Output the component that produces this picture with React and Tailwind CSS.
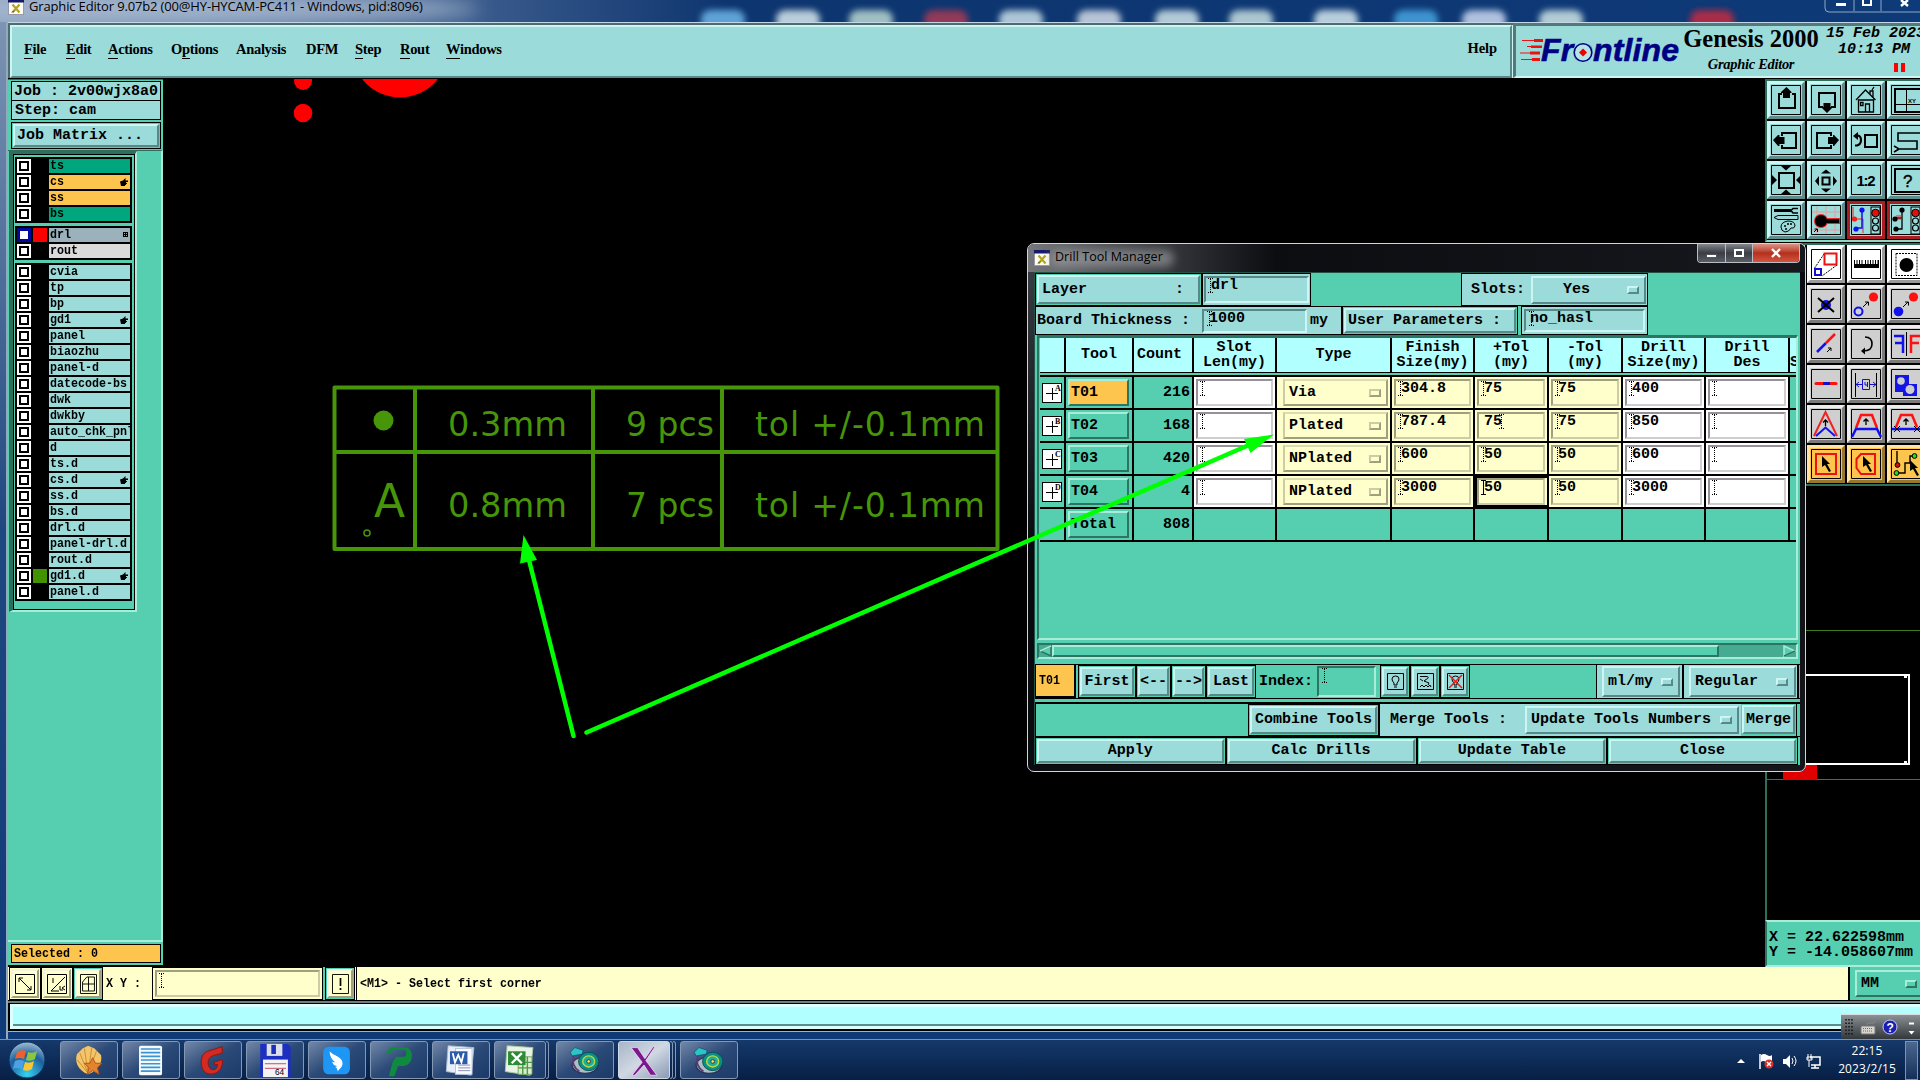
import clsx from 'clsx'

const MONO = "font-['Liberation_Mono',monospace] font-bold text-[15px] leading-[16px] whitespace-pre text-black"
const SMALL = "font-['Liberation_Mono',monospace] font-bold text-[11.67px] leading-[12px] whitespace-pre text-black inline-block scale-y-[1.14]"
const SERIF = "font-['Liberation_Serif',serif] font-bold text-black whitespace-pre"

const UP = 'border-t-[#cdf5f3] border-l-[#cdf5f3] border-b-[#598888] border-r-[#598888]'
const DOWN = 'border-t-[#598888] border-l-[#598888] border-b-[#cdf5f3] border-r-[#cdf5f3]'
const GREEN_UP = 'border-t-[#a9ecd9] border-l-[#a9ecd9] border-b-[#2d7563] border-r-[#2d7563]'
const GREEN_DOWN = 'border-t-[#2d7563] border-l-[#2d7563] border-b-[#a9ecd9] border-r-[#a9ecd9]'
const YELLOW_DOWN = 'border-t-[#a09f80] border-l-[#a09f80] border-b-[#cdcca6] border-r-[#cdcca6]'
const WHITE_DOWN = 'border-t-[#969298] border-l-[#969298] border-b-[#cfcdd0] border-r-[#cfcdd0]'

function Caret({ solid }) {
  return (
    <svg width="5" height="15" viewBox="0 0 5 15" className="shrink-0" shapeRendering="crispEdges">
      <path
        d="M0 .5h5M2.5 1v13M0 14.5h5"
        stroke="#000"
        fill="none"
        strokeDasharray={solid ? undefined : '1 1'}
      />
    </svg>
  )
}

// raised motif-style push button inside a thin black frame
function FramedButton({ children, className, inner }) {
  return (
    <div className={clsx('border border-black bg-[#55cfb0] p-px flex', className)}>
      <div className={clsx('flex-1 border-2 bg-[#9bdbda] flex items-center justify-center', UP, MONO, inner)}>
        {children}
      </div>
    </div>
  )
}

function OptionMark({ tone = 'cyan' }) {
  return (
    <span
      className={clsx(
        'block w-3 h-2 border-2 shrink-0',
        tone === 'cyan' && UP,
        tone === 'green' && GREEN_UP,
        tone === 'yellow' && 'border-t-[#cdcca6] border-l-[#cdcca6] border-b-[#a09f80] border-r-[#a09f80]'
      )}
    />
  )
}

/* ---------- title bar and menu ---------- */

function XIcon({ className }) {
  return (
    <svg width="16" height="16" viewBox="0 0 16 16" className={className}>
      <rect x=".5" y=".5" width="15" height="15" fill="#fdfdf4" stroke="#99a" />
      <rect x="0" y="0" width="16" height="3.5" fill="#141b6b" />
      <path d="M4.5 5.5l7 8M11.5 5.5l-7 8" stroke="#b3a521" strokeWidth="2.2" />
      <path d="M4 13.5l2-2" stroke="#444" />
    </svg>
  )
}

const blobs = [
  [722, '#6db5e8'], [797, '#d8e8ee'], [870, '#b9d8d2'], [945, '#a93a55'], [1020, '#c9dfe8'],
  [1098, '#d5dde8'], [1176, '#cfe3e8'], [1250, '#c6dfe0'], [1335, '#d6e8ee'], [1415, '#46a4e0'],
  [1483, '#ccd9f2'], [1560, '#cfe5e6'], [1711, '#c42c40'],
]

function TitleBar() {
  return (
    <div className="h-[22px] shrink-0 relative overflow-hidden bg-linear-to-r from-[#8fa5c2] via-[#0d356f] via-[38%] to-[#0d3a78] flex">
      <svg width="1920" height="22" className="absolute inset-0">
        <defs>
          <filter id="soft" x="-20%" y="-60%" width="140%" height="220%">
            <feGaussianBlur stdDeviation="3" />
          </filter>
          <filter id="haze" x="-20%" y="-100%" width="140%" height="300%">
            <feGaussianBlur stdDeviation="9" />
          </filter>
        </defs>
        <ellipse cx="220" cy="9" rx="260" ry="14" fill="#b4c2d6" opacity=".75" filter="url(#haze)" />
        {blobs.map(([x, c]) => (
          <rect key={x} x={x - 21} y="10" width="44" height="20" rx="9" fill={c} opacity=".85" filter="url(#soft)" />
        ))}
      </svg>
      <div className="relative flex h-[16px] w-full">
        <XIcon className="ml-2 -mt-[1px]" />
        <span className="ml-[5px] -mt-[2px] font-['Open_Sans',sans-serif] text-[13px] leading-[17px] tracking-[-0.15px] text-black whitespace-pre">
          Graphic Editor 9.07b2 (00@HY-HYCAM-PC411 - Windows, pid:8096)
        </span>
      </div>
      <svg width="96" height="14" className="absolute right-0 top-0">
        <path d="M1 0v8q0 4 4 4h91M30 0v11M57 0v11" stroke="#8ea6c6" fill="none" />
        <path d="M12 4.5h10" stroke="#fff" strokeWidth="3" />
        <path d="M39 0v5h8V0" stroke="#fff" strokeWidth="2" fill="none" />
        <path d="M77 0l7 6M84 0l-7 6" stroke="#fff" strokeWidth="2.4" />
      </svg>
    </div>
  )
}

const menus = [
  ['', 'F', 'ile', 'w-[42px]'],
  ['', 'E', 'dit', 'w-[42px]'],
  ['', 'A', 'ctions', 'w-[63px]'],
  ['O', 'p', 'tions', 'w-[65px]'],
  ['Analysis', '', '', 'w-[70px]'],
  ['DFM', '', '', 'w-[49px]'],
  ['', 'S', 'tep', 'w-[45px]'],
  ['', 'R', 'out', 'w-[46px]'],
  ['', 'W', 'indows', 'w-[70px]'],
]

function MenuBar() {
  return (
    <div className="h-[56px] flex shrink-0 border-t border-[#c3d8e6]">
      <div className="w-[1505px] border-t-2 border-l-2 border-[#4e6c70] flex">
        <div className={clsx('flex-1 border-2 bg-[#9bdbda] flex items-center pl-[12px] pb-[5px]', UP)}>
          {menus.map(([pre, u, post, w]) => (
            <span key={pre + u + post} className={clsx(SERIF, w, 'text-[14.5px] leading-[18px] tracking-[-0.3px]')}>
              {pre}
              <span className="border-b border-black pb-px">{u}</span>
              {post}
            </span>
          ))}
          <span className={clsx(SERIF, 'ml-auto mr-[13px] text-[14.5px] tracking-[-0.1px]')}>Help</span>
        </div>
        <div className="w-px bg-[#cdf5f3]" />
      </div>
      <div className="flex-1 border-t-3 border-l-3 border-b-2 border-t-[#56787b] border-l-[#56787b] border-b-[#cdf5f3] bg-[#9bdbda] flex overflow-hidden">
        <svg width="167" height="50" viewBox="1516 25 167 50" className="shrink-0">
          <path
            d="M1522 39.5h21M1520 52h20M1527 45.5h14M1521 58.5h18"
            stroke="#e11"
            strokeWidth="1.2"
          />
          <path d="M1534 38h9v3h-9zM1531 44.5h11v2.5h-11zM1530 50.5h10v3h-10zM1532 57h8v3h-8z" fill="#e11" />
          <g className="font-['Liberation_Sans',sans-serif] font-bold italic" fontSize="32" fill="#000082">
            <text x="1541" y="60" textLength="138" stroke="#000082" strokeWidth=".6">Frontline</text>
          </g>
          <circle cx="1583" cy="51.5" r="10" fill="#9bdbda" />
          <circle cx="1583" cy="51.5" r="8.8" fill="#b4e4e6" stroke="#000082" strokeWidth="1.6" />
          <path d="M1583 47.5l4 4-4 4-4-4z" fill="#e00" />
        </svg>
        <div className="flex flex-col items-center w-[136px] shrink-0">
          <span className={clsx(SERIF, 'text-[24.5px] leading-[27px] -mt-px')}>Genesis 2000</span>
          <span className={clsx(SERIF, 'italic text-[14.5px] leading-[18px] mt-[3px] tracking-[-0.3px]')}>
            Graphic Editor
          </span>
        </div>
        <div className={clsx(MONO, 'italic ml-[7px] w-[94px] shrink-0 !leading-[15px] flex flex-col')}>
          <span>15 Feb 2023</span>
          <span className="pl-[12px] pt-px">10:13 PM</span>
          <span className="flex gap-[3px] pl-[68px] mt-[6px]">
            <i className="block w-1 h-[9px] bg-[#f00]" />
            <i className="block w-1 h-[9px] bg-[#f00]" />
          </span>
        </div>
      </div>
    </div>
  )
}

/* ---------- left sidebar ---------- */

const CYAN = 'bg-[#9bdbda]'
const groups = [
  [
    { n: 'ts', c: 'bg-[#00a67e]' },
    { n: 'cs', c: 'bg-[#fdc54d]', hand: true },
    { n: 'ss', c: 'bg-[#fdc54d]' },
    { n: 'bs', c: 'bg-[#00a67e]' },
  ],
  [
    { n: 'drl', c: 'bg-[#9bb1bc]', on: true, sw: 'bg-[#f00]', grid: true },
    { n: 'rout', c: 'bg-[#dbdbdb]' },
  ],
  [
    { n: 'cvia' }, { n: 'tp' }, { n: 'bp' }, { n: 'gd1', hand: true }, { n: 'panel' }, { n: 'biaozhu' },
    { n: 'panel-d' }, { n: 'datecode-bs' }, { n: 'dwk' }, { n: 'dwkby' }, { n: 'auto_chk_pnl' }, { n: 'd' },
    { n: 'ts.d' }, { n: 'cs.d', hand: true }, { n: 'ss.d' }, { n: 'bs.d' }, { n: 'drl.d' },
    { n: 'panel-drl.d' }, { n: 'rout.d' }, { n: 'gd1.d', hand: true, sw: 'bg-[#419400]' }, { n: 'panel.d' },
  ],
]

function Layer({ n, c = CYAN, on, sw, hand, grid }) {
  return (
    <div className="flex gap-[2px] h-[14px]">
      <div className={clsx('w-[14px] flex items-center justify-center', on ? 'bg-[#000a9c]' : 'bg-white')}>
        <i className={clsx('block border-2 bg-white', on ? 'w-[8px] h-[8px] border-white' : 'w-[10px] h-[10px] border-black')} />
      </div>
      <div className={clsx('w-[14px]', sw)} />
      <div className={clsx('w-[81px] flex items-center overflow-hidden pl-px', c)}>
        <span className={SMALL}>{n}</span>
        {hand && (
          <svg width="8" height="8" viewBox="0 0 8 8" className="ml-auto mr-[2px] shrink-0">
            <path d="M0 3.5l3-1L5.5 0v2.5H8v1.5H6v1h1v1H6v1H5v1H1z" fill="#000" />
          </svg>
        )}
        {grid && (
          <svg width="6" height="6" viewBox="0 0 6 6" className="ml-auto mr-[1px] shrink-0" shapeRendering="crispEdges">
            <path d="M.5.5h4v4h-4zM2.5 0v5M0 2.5h5" stroke="#000" fill="none" />
          </svg>
        )}
      </div>
    </div>
  )
}

function Sidebar() {
  return (
    <div className="w-[155px] shrink-0 bg-[#55cfb0] flex flex-col border-t border-[#2d6f5d]">
      <div className={clsx(MONO, 'mt-px mx-[3px] mr-[2px] h-[20px] border border-black bg-[#9bdbda] pl-[2px] !leading-[20px]')}>
        Job : 2v00wjx8a0
      </div>
      <div className={clsx(MONO, '-mt-px ml-[3px] mr-[2px] h-[20px] border border-black bg-[#9bdbda] pl-[3px] !leading-[19px]')}>
        Step: cam
      </div>
      <FramedButton className="mt-[2px] ml-[3px] mr-[2px] h-[27px]" inner="!justify-start pl-[2px] pt-px">
        Job Matrix ...
      </FramedButton>
      <div className="mt-px h-[794px] border-t border-t-[#2d6f5d] border-r-2 border-r-[#a9ecd9] border-b-2 border-b-[#a9ecd9]">
        <div className="ml-px w-[128px] h-[461px] border-l-4 border-t-3 border-r-2 border-b-2 border-t-[#2d6f5d] border-l-[#2d6f5d] border-r-[#a9ecd9] border-b-[#a9ecd9]">
          <div className="h-full border border-black pl-px pt-[2px] flex flex-col gap-[3px]">
            {groups.map((g, i) => (
              <div key={i} className="w-[117px] bg-black p-[2px] flex flex-col gap-[2px]">
                {g.map(l => (
                  <Layer key={l.n} {...l} />
                ))}
              </div>
            ))}
          </div>
        </div>
      </div>
      <div className="h-[23px] pt-[2px] pl-[3px] pr-[2px] bg-[#55cfb0]">
        <div className="h-[19px] border border-black bg-[#fdc54d] pl-[2px] flex items-center">
          <span className={SMALL}>Selected : 0</span>
        </div>
      </div>
      <div className="h-[2px] bg-black" />
    </div>
  )
}

/* ---------- CAD canvas ---------- */

function Canvas() {
  return (
    <svg width="1602" height="888" viewBox="163 79 1602 888" className="bg-black shrink-0 block">
      <g fill="#f00">
        <circle cx="303" cy="81" r="9" />
        <circle cx="303" cy="113" r="9.3" />
        <circle cx="400" cy="49.5" r="48" />
      </g>
      <g stroke="#479609" strokeWidth="4" fill="none" strokeLinejoin="round">
        <rect x="334.5" y="387.5" width="663" height="161.5" />
        <path d="M334 452h664M415 387v162M593 387v162M722 387v162" />
      </g>
      <circle cx="383.5" cy="420.5" r="10" fill="#479609" />
      <circle cx="367" cy="533" r="3" fill="none" stroke="#479609" strokeWidth="1.5" />
      <g className="font-['DejaVu_Sans',sans-serif]" fill="#479609" fontSize="33">
        <text x="374" y="516.5" fontSize="46" textLength="31" lengthAdjust="spacingAndGlyphs">A</text>
        <text x="448" y="435.7" textLength="119" lengthAdjust="spacingAndGlyphs">0.3mm</text>
        <text x="626" y="435.7" textLength="88">9 pcs</text>
        <text x="755" y="435.7" textLength="230">tol +/-0.1mm</text>
        <text x="448" y="516.5" textLength="119" lengthAdjust="spacingAndGlyphs">0.8mm</text>
        <text x="626" y="516.5" textLength="88">7 pcs</text>
        <text x="755" y="516.5" textLength="230">tol +/-0.1mm</text>
      </g>
    </svg>
  )
}

/* ---------- right tool palettes ---------- */

const traffic = (
  <>
    <rect x="24" y="6" width="9" height="27" fill="#9bdbda" stroke="#000" />
    <circle cx="28.5" cy="12" r="3.8" fill="#e01010" stroke="#000" />
    <circle cx="28.5" cy="20" r="3" fill="none" stroke="#000" strokeWidth="1.2" />
    <circle cx="28.5" cy="27" r="3" fill="none" stroke="#000" strokeWidth="1.2" />
  </>
)

const glyphs = {
  up: (
    <>
      <path d="M15 13h-3v14h16V13h-3" fill="none" stroke="#000" strokeWidth="2" />
      <path d="M19.5 6l5 5v1h-1.5v5h-7v-5H14v-1z" />
    </>
  ),
  down: (
    <>
      <path d="M16 26h-4V12h16v14h-4" fill="none" stroke="#000" strokeWidth="2" />
      <path d="M20 32l-5-5v-1h1.5v-4h7v4H25v1z" />
    </>
  ),
  house: (
    <path
      d="M9 19l9.5-10 10 10M11.5 19v12h15V19zM18.5 31v-8h4v8M13.5 21.5h2.5v3h-2.5zM23 13v-3h3v6M25 9l2-3"
      fill="none"
      stroke="#000"
      strokeWidth="1.3"
    />
  ),
  xy: (
    <>
      <path d="M8 8h26v23H8z" fill="none" stroke="#000" strokeWidth="2" />
      <path d="M19.5 8v23M8 23.5h26" stroke="#000" />
      <text x="21" y="22" fontSize="6" className="font-['Liberation_Sans',sans-serif] font-bold">XY</text>
    </>
  ),
  left: (
    <>
      <path d="M15 15v-3h14v15H15v-3" fill="none" stroke="#000" strokeWidth="2" />
      <path d="M6 19l5-5h1.5v2h5v7h-5v2H11z" />
    </>
  ),
  right: (
    <>
      <path d="M24 15v-3H10v15h14v-3" fill="none" stroke="#000" strokeWidth="2" />
      <path d="M32 19l-5-5h-1v2h-5v7h5v2h1z" />
    </>
  ),
  back: (
    <>
      <path d="M18 14h12v12H18z" fill="none" stroke="#000" strokeWidth="2" />
      <path d="M8 14.5h2q4 0 4 4.5t-4 5.5h-2" fill="none" stroke="#000" strokeWidth="2.2" />
      <path d="M6 15l5-4v8z" />
    </>
  ),
  snake: (
    <path d="M38 9l-4 3H11v8h19v8H12l-5-3M12 28l-5 3" fill="none" stroke="#000" strokeWidth="1.6" />
  ),
  zoomin: (
    <>
      <path d="M12 12h15v15H12z" fill="none" stroke="#000" strokeWidth="2" />
      <path d="M14 5h10l-5 4.5zM14 33h10l-5-4.5zM5 14v10l5-5zM34 14v10l-5-5z" />
    </>
  ),
  zoomout: (
    <>
      <path d="M15.5 16.5h7v7h-7z" fill="none" stroke="#000" strokeWidth="2" />
      <path d="M14 12.5h10l-5-4zM14 27.5h10l-5 4zM12 15v10l-4-5zM26 15v10l4-5z" />
    </>
  ),
  ratio: (
    <text x="9.5" y="24.5" fontSize="15" textLength="19" className="font-['Liberation_Sans',sans-serif] font-bold">1:2</text>
  ),
  help: (
    <>
      <path d="M8 8h26v23H8z" fill="none" stroke="#000" strokeWidth="2" />
      <text x="16" y="26" fontSize="17" className="font-['Liberation_Sans',sans-serif]" stroke="#000" strokeWidth=".4">?</text>
    </>
  ),
  tools: (
    <>
      <path d="M7 9.5h17" stroke="#000" strokeWidth="3" />
      <path d="M31 7.5h-5l-2 2 2 2.5h5" fill="none" stroke="#000" strokeWidth="1.6" />
      <path d="M7 16.5l4-2h20v4H11z" fill="none" stroke="#000" />
      <path d="M14 26q0-5 7-6 7 0 7 5-1 3-4 2-2 4-6 4-4-1-4-5z" fill="none" stroke="#000" />
      <path d="M17 25h2M20 23h2M23 23h2M18 28h2" stroke="#000" strokeWidth="1.4" />
    </>
  ),
  pad: (
    <>
      <path d="M10 5v28M19 5v28M28 5v28M5 11h28M5 29h28" stroke="#e99" fill="none" />
      <path d="M14 20h19" stroke="#e22" strokeWidth="6" />
      <circle cx="14" cy="20" r="7" fill="#e22" />
      <path d="M14 20h18" stroke="#000" strokeWidth="4" />
      <circle cx="14" cy="20" r="6" />
      <path d="M7 31l3-3M7.5 28h3v3" stroke="#000" fill="none" />
    </>
  ),
  lightRed: (
    <>
      <path d="M6 6v12h10v14" stroke="#e22" fill="none" />
      <path d="M15 9v18H9" stroke="#11e" strokeWidth="1.5" fill="none" />
      <circle cx="15" cy="9" r="2.6" fill="#11e" />
      <circle cx="7.5" cy="18" r="2.6" fill="#e22" />
      <circle cx="9" cy="28" r="2.6" fill="#11e" />
      {traffic}
    </>
  ),
  lightBlack: (
    <>
      <path d="M15 9v8H8M15 17v11H9" stroke="#000" strokeWidth="1.3" fill="none" />
      <path d="M10 14v5M12 14v5M14 14v5" stroke="#e22" />
      <circle cx="15" cy="9" r="2.6" />
      <circle cx="8" cy="18" r="2.6" />
      <circle cx="9" cy="28" r="2.6" />
      {traffic}
    </>
  ),
  resize: (
    <>
      <path d="M17 9L7 24M30 20L15 31" stroke="#000" strokeDasharray="2 1" />
      <path d="M17.5 8.5h12v11h-12z" fill="none" stroke="#e11" strokeWidth="2" />
      <path d="M8 24h6v6H8z" fill="none" stroke="#11c" strokeWidth="2" />
    </>
  ),
  ruler: <path d="M7 15h1v4h1.5v-4h1v4h1.5v-4h1v4h1.5v-4h1v4H18v-4h1v4h1.5v-4h1v4H23v-4h1v4h1.5v-4h1v4H28v-4h1v4h1.5v-4H32v8H7z" />,
  dotsel: (
    <>
      <path d="M9 8.5h21v22H9z" fill="none" stroke="#000" strokeDasharray="2 1" />
      <circle cx="19.5" cy="20" r="7" />
    </>
  ),
  cross: (
    <>
      <circle cx="19" cy="20" r="5" fill="#1414d8" />
      <path d="M11 13l16 14M27 13L11 27" stroke="#000" strokeWidth="2" />
    </>
  ),
  moveOpen: (
    <>
      <circle cx="11.5" cy="26.5" r="4" fill="none" stroke="#11e" strokeWidth="2" />
      <circle cx="26.5" cy="12" r="4.6" fill="#f11" />
      <path d="M16 22l5-5M18 17h3.5v3.5" stroke="#000" fill="none" />
    </>
  ),
  moveFull: (
    <>
      <circle cx="11.5" cy="26.5" r="4.8" fill="#11e" />
      <circle cx="26.5" cy="12" r="4.6" fill="#f11" />
      <path d="M16 22l5-5M18 17h3.5v3.5" stroke="#000" fill="none" />
    </>
  ),
  slash: (
    <>
      <path d="M10 27l9-9" stroke="#11e" strokeWidth="2.5" />
      <path d="M19 18l9-9" stroke="#f11" strokeWidth="2.5" />
      <path d="M20 27l4-4M21 23h3v3" stroke="#000" fill="none" />
    </>
  ),
  rotate: (
    <>
      <path d="M18 12q7 0 7 7t-9 7" fill="none" stroke="#000" strokeWidth="1.6" />
      <path d="M14 26l4-3.5v7z" />
    </>
  ),
  mirror: (
    <>
      <path d="M7 11h9v17M16 18H8" fill="none" stroke="#11e" strokeWidth="2.5" />
      <path d="M33 11h-9v17M24 18h8" fill="none" stroke="#f11" strokeWidth="2.5" />
      <path d="M19.5 7v24" stroke="#000" />
    </>
  ),
  bar: (
    <>
      <path d="M9 18.5h20" stroke="#f11" strokeWidth="3" strokeLinecap="round" />
      <path d="M16 18.5h7" stroke="#11c" strokeWidth="3" />
    </>
  ),
  gauge: (
    <>
      <path d="M8.5 8v24M29.5 8v24" stroke="#000" />
      <path d="M9 19.5h6M23 19.5h6M12 17l-3 2.5 3 2.5M26 17l3 2.5-3 2.5M15.5 14.5h7v10h-7z" fill="none" stroke="#11c" />
      <path d="M18 17v3h3M20.5 17v5" fill="none" stroke="#11c" />
    </>
  ),
  shapes: (
    <>
      <path d="M8 10h14v9h8v12H16v-4H8z" fill="#1414e8" />
      <circle cx="14" cy="16" r="3.8" fill="#ccc" />
      <circle cx="23" cy="24.5" r="4.5" fill="#ccc" />
    </>
  ),
  peakA: (
    <>
      <path d="M7 31L18.5 7 30 31" fill="none" stroke="#e22" strokeWidth="2" />
      <path d="M9 31l9.5-8.5L28 31" fill="none" stroke="#11e" strokeWidth="2" />
      <path d="M18.5 21v-6M16 17.5l2.5-2.5 2.5 2.5" stroke="#000" fill="none" strokeWidth="1.3" />
    </>
  ),
  peakB: (
    <>
      <path d="M9 23l5-13h11l5 13" fill="none" stroke="#f11" strokeWidth="2.5" />
      <path d="M5 32l4-8h21l4 8" fill="none" stroke="#11e" strokeWidth="2.5" />
      <path d="M19 20v-6M16.5 16.5l2.5-2.5 2.5 2.5" stroke="#000" fill="none" strokeWidth="1.3" />
    </>
  ),
  peakC: (
    <>
      <path d="M9 22l5-12h11l5 12" fill="none" stroke="#f11" strokeWidth="2.5" />
      <path d="M5 24h29" stroke="#11e" strokeWidth="2.5" />
      <path d="M7 21l6 6M13 21l-6 6M27 21l6 6M33 21l-6 6" stroke="#000" />
      <path d="M19 20v-6M16.5 16.5l2.5-2.5 2.5 2.5" stroke="#000" fill="none" strokeWidth="1.3" />
    </>
  ),
  selRect: (
    <>
      <path d="M9 9h20v20H9z" fill="none" stroke="#e11" strokeWidth="2" />
      <path d="M15 11l8 8h-3l4 7-2 1-4-7-3 2z" />
    </>
  ),
  selPoly: (
    <>
      <path d="M14 9h14v20H14l-4.5-6v-9z" fill="none" stroke="#e11" strokeWidth="2" />
      <path d="M16 11l8 8h-3l4 7-2 1-4-7-3 2z" />
    </>
  ),
  selNet: (
    <>
      <path d="M10 6v14M10 28h8V18h5v-7h4" fill="none" stroke="#000" strokeWidth="1.4" />
      <circle cx="10.5" cy="20" r="2.4" fill="#c11" stroke="#000" />
      <circle cx="27.5" cy="11" r="2.4" fill="#2d2" stroke="#000" />
      <circle cx="9.5" cy="28" r="2.4" fill="#2d2" stroke="#000" />
      <path d="M23 15l8 8h-3l4 7-2 1-4-7-3 2z" />
    </>
  ),
}

const tones = {
  cyan: 'bg-[#9bdbda] border-t-[#cdf5f3] border-l-[#cdf5f3] border-b-[#5d8c8c] border-r-[#5d8c8c]',
  red: 'bg-[#9bdbda] border-[#a81e22]',
  white: 'bg-white border-t-[#fff] border-l-[#fff] border-b-[#9a9a9a] border-r-[#9a9a9a]',
  gray: 'bg-[#cfcfcf] border-t-[#ededed] border-l-[#ededed] border-b-[#7b7b7b] border-r-[#7b7b7b]',
  orange: 'bg-[#fdc54d] border-t-[#fee4a8] border-l-[#fee4a8] border-b-[#98762c] border-r-[#98762c]',
}

function ToolRow({ names, tone }) {
  return (
    <div className="flex gap-[2px]">
      {names.map((n, i) => {
        const t = n.startsWith('light') ? 'red' : tone
        return (
          <div key={n + i} className={clsx('w-[38px] h-[38px] border-3 shrink-0 relative', tones[t])}>
            <svg width="38" height="38" viewBox="0 0 38 38" className="absolute -left-[3px] -top-[3px]">
              <path d="M4.5 4.5h29v29h-29z" fill="none" stroke="#000" />
              {glyphs[n]}
            </svg>
          </div>
        )
      })}
    </div>
  )
}

function RightColumn() {
  return (
    <div className="w-[155px] shrink-0 bg-black overflow-hidden flex flex-col">
      <div className="border-l-2 border-t-2 border-[#2d6f5d] border-b-2 border-b-[#8fd6c4] h-[163px] flex flex-col gap-[2px]">
        <ToolRow tone="cyan" names={['up', 'down', 'house', 'xy']} />
        <ToolRow tone="cyan" names={['left', 'right', 'back', 'snake']} />
        <ToolRow tone="cyan" names={['zoomin', 'zoomout', 'ratio', 'help']} />
        <ToolRow tone="cyan" names={['tools', 'pad', 'lightRed', 'lightBlack']} />
      </div>
      <div className="border-l-2 border-t-2 border-[#2d6f5d] border-b-2 mt-px h-[243px] flex flex-col gap-[2px]">
        <ToolRow tone="white" names={['resize', 'resize', 'ruler', 'dotsel']} />
        <ToolRow tone="gray" names={['cross', 'cross', 'moveOpen', 'moveFull']} />
        <ToolRow tone="gray" names={['slash', 'slash', 'rotate', 'mirror']} />
        <ToolRow tone="gray" names={['bar', 'bar', 'gauge', 'shapes']} />
        <ToolRow tone="gray" names={['peakA', 'peakA', 'peakB', 'peakC']} />
        <ToolRow tone="orange" names={['selRect', 'selRect', 'selPoly', 'selNet']} />
      </div>
      <svg width="155" height="434" viewBox="1765 486 155 434" className="bg-black shrink-0" shapeRendering="crispEdges">
        <path d="M1765.5 486v434" stroke="#2d6f5d" strokeWidth="2" />
        <path d="M1766 630.5h154M1766 779.5h154" stroke="#3f7d1c" />
        <rect x="1783" y="763" width="34" height="17" fill="#e00000" />
        <path d="M1790 675h119v89h-119" fill="none" stroke="#fff" strokeWidth="2" />
        <path d="M1904 677h3M1904 762h3" stroke="#fff" strokeWidth="2" />
      </svg>
      <div className={clsx(MONO, 'h-[47px] border-t-2 border-l-2 border-b-2 bg-[#55cfb0] pl-[2px] pt-[8px] !leading-[15px]', 'border-t-[#a9ecd9] border-l-[#2d7563] border-b-[#a9ecd9]')}>
        <div>X = 22.622598mm</div>
        <div>Y = -14.058607mm</div>
      </div>
    </div>
  )
}

/* ---------- bottom command line ---------- */

function CmdIcon({ green, w = 20, children }) {
  return (
    <div className={clsx('h-full border border-black p-px', green ? 'bg-[#55cfb0]' : 'bg-[#ffffcc]')}>
      <div className="w-full h-full bg-[#ffffcc] border-2 border-t-[#f4f3dc] border-l-[#f4f3dc] border-b-[#a09f80] border-r-[#a09f80] flex items-center justify-center">
        <svg width={w} height="20" viewBox="0 0 20 20" preserveAspectRatio="none" fill="none" stroke="#000">
          {children}
        </svg>
      </div>
    </div>
  )
}

function CommandRow() {
  return (
    <div className="h-[33px] shrink-0 flex bg-[#ffffcc]">
      <div className="w-[33px] pl-[1px]">
        <CmdIcon>
          <path d="M.5.5h19v19H.5zM4 4l12 12M4 8V4h4M16 12v4h-4" />
        </CmdIcon>
      </div>
      <div className="w-[32px]">
        <CmdIcon>
          <path d="M.5.5h19v19H.5zM4 17L18 3M4 17h8M6 4v5M13 12v4h3M18 12l-3 2 3 2" />
        </CmdIcon>
      </div>
      <div className="w-[30px]">
        <CmdIcon green w={17}>
          <path d="M.6.5h18.800v19H.6z" />
          <path d="M8 3h9v14H3V8zM10 3v14M3 10h14" />
        </CmdIcon>
      </div>
      <div className="w-[49px] pl-[3px] flex items-center">
        <span className={SMALL}>X Y :</span>
      </div>
      <div className="w-[171px] border border-black p-[2px]">
        <div className={clsx('h-full border-2 pt-[1px] pl-[2px] bg-[#ffffcc]', YELLOW_DOWN)}>
          <Caret />
        </div>
      </div>
      <div className="w-[2px] bg-[#55cfb0]" />
      <div className="w-[30px]">
        <CmdIcon green w={17}>
          <path d="M.6.5h18.800v19H.6z" />
          <path d="M10 4v8M10 14v2" strokeWidth="2" />
        </CmdIcon>
      </div>
      <div className="flex-1 ml-px border-l border-black pl-[3px] pt-px flex items-center">
        <span className={SMALL}>&lt;M1&gt; - Select first corner</span>
      </div>
      <div className="w-[72px] border-l-2 border-black bg-[#55cfb0] pl-[5px] py-[3px] overflow-hidden">
        <div className={clsx('w-[80px] h-[27px] border-2 flex items-center pl-[4px] gap-[26px]', GREEN_UP)}>
          <span className={MONO}>MM</span>
          <OptionMark tone="green" />
        </div>
      </div>
    </div>
  )
}

/* ---------- Windows taskbar ---------- */

const spool = (
  <>
    <ellipse cx="18" cy="24" rx="14" ry="9" fill="#aebfc4" stroke="#2b3055" strokeWidth="1.5" />
    <path d="M6 14q-4 10 6 17" stroke="#5d3a78" strokeWidth="2" fill="none" />
    <ellipse cx="22" cy="20" rx="11" ry="10" fill="#0a8f84" stroke="#0a4f55" />
    <ellipse cx="22" cy="20" rx="6.5" ry="6" fill="#17b0a0" stroke="#c5d838" strokeWidth="1.5" />
    <circle cx="22" cy="20" r="2" fill="#f2e05a" stroke="#333" />
    <path d="M2 10l5-5 9 3-1 4-11 2z" fill="#2cc6c0" stroke="#117" strokeWidth=".5" />
  </>
)

const apps = [
  <>
    <path d="M17 34C6 30 2 20 5 12l6-6 6-3 7 3 7 7c2 8-3 17-14 21z" fill="#f4c46a" />
    <path d="M17 33L8 11M17 33L13 6M17 33l4-28M17 33l9-24M17 33L5 18" stroke="#c98a2b" />
    <path d="M22 16l3 6 7 0-5 5 2 7-7-4-6 4 2-7-5-5 6 0z" fill="#e5822c" stroke="#a8551c" />
  </>,
  <>
    <rect x="5" y="3" width="25" height="32" rx="2" fill="#f4faff" />
    <path d="M7 6.5h21M7 10.5h21M7 14.5h21M7 18.5h21M7 22.5h21M7 26.5h21M7 30.5h21" stroke="#3a94d0" strokeWidth="1.8" />
  </>,
  <path d="M28 4L12 9C6 11 4 18 6 26c2 7 8 9 14 7 6-2 9-8 8-15l-9 3 1 3 3-1c0 4-2 6-5 6-4 0-6-5-5-10 1-4 4-5 8-6l7-2z" fill="#d42a22" stroke="#8e1410" />,
  <>
    <path d="M2 1h30l3 3v33H2z" fill="#1d2fc0" />
    <rect x="9" y="1" width="17" height="13" fill="#dde0e8" />
    <rect x="14" y="2" width="5" height="10" fill="#1d2fc0" />
    <rect x="5" y="18" width="27" height="19" fill="#f4f4f4" />
    <path d="M7 22.5h23M7 27.5h23" stroke="#c5405a" />
    <text x="18" y="35" fontSize="9" className="font-['Liberation_Sans',sans-serif]">64</text>
  </>,
  <>
    <rect x="3" y="4" width="29" height="30" rx="6" fill="#1e96f5" />
    <path d="M10 9c4 5 14 6 14 13 0 5-4 6-5 9-1-3-1-4-3-5 1 0 2-1 2-1-4-1-5-3-5-5 1 1 2 1 3 1-4-3-6-7-6-12z" fill="#fff" />
  </>,
  <path d="M3 12l6-7h16q7 1 7 9 0 9-9 11h-6l-4 11H7l4-15 4-6h8q3-1 3-4t-3-4H12l-4 5z" fill="#0f8a3f" />,
  <>
    <path d="M4 3l28 2-3 30L2 31z" fill="#e8eef8" stroke="#a9b8cf" />
    <rect x="12" y="6" width="18" height="28" fill="#f8fbff" stroke="#b7c4da" />
    <path d="M15 24h13M15 27h13M15 30h13" stroke="#88a" />
    <rect x="6" y="9" width="19" height="14" fill="#2c5ba8" />
    <path d="M9 11l2.5 10L15 13l3.5 8L21 11" stroke="#fff" strokeWidth="2" fill="none" />
  </>,
  <>
    <path d="M4 3l28 2-3 30L2 31z" fill="#e9f3e6" stroke="#a9c8a2" />
    <path d="M16 15h15v19H16z" fill="#d9ecd2" stroke="#6aa55c" />
    <path d="M16 21h15M16 27h15M21 15v19M26 15v19" stroke="#4f9a3f" strokeWidth="1.5" />
    <rect x="5" y="9" width="19" height="15" fill="#2f8a36" />
    <path d="M9 11l11 11M20 11L9 22" stroke="#fff" strokeWidth="2.5" />
  </>,
  spool,
  <path d="M4 5h7l8 12 9-13h2L20 19l12 16h-7L18 24 8 35H5l11-14z" fill="#7d1790" stroke="#f0e4f4" strokeWidth=".8" />,
  spool,
]

// apps with several open windows show stacked edges on the right
const stacked = [7, 9]

function Taskbar() {
  return (
    <div className="h-[41px] shrink-0 border-t border-[#6f93b8] bg-linear-to-b from-[#15396b] to-[#071f45] flex items-center">
      <svg width="40" height="40" viewBox="0 0 40 40" className="ml-[7px] shrink-0">
        <defs>
          <radialGradient id="orb" cx=".5" cy=".9" r=".9">
            <stop offset="0" stopColor="#35d3f2" />
            <stop offset=".6" stopColor="#1c5f9d" />
            <stop offset="1" stopColor="#a3bdd2" />
          </radialGradient>
        </defs>
        <circle cx="20" cy="20" r="18" fill="url(#orb)" stroke="#07305c" />
        <path d="M10 12q5-3 9-1l-2 8q-4-2-9 0z" fill="#ee6030" />
        <path d="M21 12q5 2 9-1l-2 8q-4 3-9 1z" fill="#8cc63e" />
        <path d="M8 21q4-2 9 0l-2 8q-4-2-9 0z" fill="#4ea0e4" />
        <path d="M18 22q5 2 9-1l-2 8q-4 3-9 1z" fill="#fcc630" />
      </svg>
      <div className="ml-[13px] flex gap-1">
        {apps.map((icon, i) => {
          const multi = stacked.includes(i)
          return (
            <div key={i} className="w-[58px] flex">
              <div
                className={clsx(
                  'h-[38px] rounded-[3px] border flex items-center justify-center shrink-0',
                  multi ? 'w-[52px]' : 'w-[58px]',
                  i === 9
                    ? 'border-[#cfd8e6] bg-linear-to-br from-[#a9b6c8] via-[#d0d8e3] to-[#8b9ab4]'
                    : 'border-[#8497b3] bg-linear-to-br from-[#7288a8] via-[#2c4a77] to-[#1b3a69]'
                )}
              >
                <svg width="34" height="35" viewBox="0 0 36 38">{icon}</svg>
              </div>
              {multi && <div className="w-[3px] h-[38px] border-r border-y border-[#8497b3] rounded-r-[3px]" />}
              {i === 9 && <div className="w-[3px] h-[38px] border-r border-y border-[#8497b3] rounded-r-[3px]" />}
            </div>
          )
        })}
      </div>
      <div className="ml-auto flex items-center h-full">
        <svg width="90" height="24" viewBox="1736 1048 90 24">
          <path d="M1737 1063l4-4 4 4z" fill="#fff" />
          <path d="M1760 1054v15" stroke="#fff" strokeWidth="1.5" />
          <path d="M1761 1055q3-2 6 0t5 0v7q-3 2-6 0t-5 0z" fill="#fff" />
          <circle cx="1769" cy="1064" r="4.5" fill="#d9302a" />
          <path d="M1767 1062l4 4M1771 1062l-4 4" stroke="#fff" strokeWidth="1.3" />
          <path d="M1783 1059h3l4-4v13l-4-4h-3z" fill="#fff" />
          <path d="M1792 1058q2 3 0 6M1794 1056q4 5 0 10" stroke="#fff" fill="none" />
          <path d="M1810 1057h10v8h-9M1815 1065v3M1811 1068h8" stroke="#fff" strokeWidth="1.5" fill="none" />
          <path d="M1808 1054v5M1811 1054v5M1807 1057h5v3h-5zM1809 1060v7" stroke="#fff" fill="none" />
        </svg>
        <div className="w-[79px] pl-[3px] text-center font-['Open_Sans',sans-serif] text-[12px] leading-[18px] text-white tracking-[0.1px]">
          <div>22:15</div>
          <div>2023/2/15</div>
        </div>
        <div className="w-[13px] h-[39px] border border-[#7d93b3] bg-linear-to-b from-[#4d678f] to-[#14305a] mr-[2px]" />
      </div>
    </div>
  )
}

/* ---------- Drill Tool Manager ---------- */

const COLS = 'grid grid-cols-[26px_68px_60px_83px_115px_83px_74px_74px_83px_84px_6px]'

const heads = [[''], ['Tool'], ['Count'], ['Slot', 'Len(my)'], ['Type'], ['Finish', 'Size(my)'], ['+Tol', '(my)'], ['-Tol', '(my)'], ['Drill', 'Size(my)'], ['Drill', 'Des'], ['', 'S']]

const rows = [
  { t: 'T01', k: 'A', c: '216', type: 'Via', fin: '304.8', p: '75', m: '75', d: '400', sel: true },
  { t: 'T02', k: 'B', c: '168', type: 'Plated', fin: '787.4', p: '75', m: '75', d: '850', caretEnd: true },
  { t: 'T03', k: 'C', c: '420', type: 'NPlated', fin: '600', p: '50', m: '50', d: '600' },
  { t: 'T04', k: 'D', c: '4', type: 'NPlated', fin: '3000', p: '50', m: '50', d: '3000', focus: true },
]

function Cell({ children, className }) {
  return <div className={clsx('border-r-2 border-black overflow-hidden', className)}>{children}</div>
}

function Field({ value, tone, focus, caretEnd }) {
  return (
    <Cell className={clsx('p-[2px]', tone === 'white' ? 'bg-white' : 'bg-[#ffffcc]', focus && 'outline-3 -outline-offset-2 outline-black')}>
      <div className={clsx('h-[27px] border-2 flex items-start pl-[2px]', tone === 'white' ? WHITE_DOWN : YELLOW_DOWN)}>
        {!caretEnd && <Caret solid={focus} />}
        <span className={clsx(MONO, '!leading-[15px]', caretEnd ? 'ml-[3px]' : '-ml-[2px]')}>{value}</span>
        {caretEnd && <span className="-ml-[3px]"><Caret /></span>}
      </div>
    </Cell>
  )
}

function DrillTable() {
  return (
    <div className="mx-[2px] h-[305px] border-2 border-t-3 border-[#2d7563] border-r-[#a9ecd9] border-b-[#a9ecd9] bg-[#55cfb0] pl-px overflow-hidden">
      <div className={clsx(COLS, 'h-[35px] bg-[#b2ffff] border-b border-black')}>
        {heads.map((h, i) => (
          <Cell
            key={i}
            className={clsx(
              MONO,
              'flex flex-col justify-center !leading-[15.5px]',
              i === 10 ? '!border-r-0 items-start' : 'items-center',
              i === 2 && 'pr-[7px]'
            )}
          >
            {h.map((l, j) => (
              <span key={j} className={clsx(!l && 'h-[15px]')}>{l}</span>
            ))}
          </Cell>
        ))}
      </div>
      <div className="mt-[2px] border-t-2 border-black">
        {rows.map(r => (
          <div key={r.t} className={clsx(COLS, 'h-[33px] border-b-2 border-black')}>
            <Cell className="flex items-center justify-center">
              <div className="w-[20px] h-[20px] bg-white border border-black">
                <svg width="18" height="18" viewBox="0 0 18 18">
                  <path d="M3 9.5h12M9.5 4v12" stroke="#000" />
                  <text x="12" y="7" fontSize="8" className="font-['Liberation_Serif',serif] font-bold">{r.k}</text>
                </svg>
              </div>
            </Cell>
            <Cell className="p-[2px] pr-[3px]">
              <div className={clsx(MONO, 'h-[27px] border-2 pl-px flex items-center', GREEN_UP, r.sel && 'bg-[#fdc54d]')}>
                {r.t}
              </div>
            </Cell>
            <Cell className={clsx(MONO, 'flex items-center justify-end pr-[2px]')}>{r.c}</Cell>
            <Field tone="white" value="" />
            <Cell className="bg-[#ffffcc] p-[2px] pl-[6px]">
              <div className={clsx(MONO, 'h-[27px] border-2 flex items-center justify-between pl-[4px] pr-[5px]', 'border-t-[#dcdbb4] border-l-[#cdcca6] border-b-[#a09f80] border-r-[#a09f80]')}>
                {r.type}
                <OptionMark tone="yellow" />
              </div>
            </Cell>
            <Field value={r.fin} />
            <Field value={r.p} caretEnd={r.caretEnd} focus={r.focus} />
            <Field value={r.m} />
            <Field tone="white" value={r.d} />
            <Field tone="white" value="" />
            <div />
          </div>
        ))}
        <div className={clsx(COLS, 'h-[33px] border-b-2 border-black')}>
          <Cell />
          <Cell className="p-[2px] pr-[3px]">
            <div className={clsx(MONO, 'h-[27px] border-2 pl-px flex items-center', GREEN_UP)}>Total</div>
          </Cell>
          <Cell className={clsx(MONO, 'flex items-center justify-end pr-[2px]')}>808</Cell>
          <Cell />
          <Cell />
          <Cell />
          <Cell />
          <Cell />
          <Cell />
          <Cell />
          <div />
        </div>
      </div>
    </div>
  )
}

function Scrollbar() {
  return (
    <div className={clsx('mx-[2px] mt-[3px] h-[16px] border-2 bg-[#45ac92] flex', GREEN_DOWN)}>
      <svg width="13" height="12" viewBox="0 0 13 12">
        <path d="M12 1L1 6l11 5z" fill="#55cfb0" stroke="#2d7563" strokeWidth="1.5" />
        <path d="M12 1L1 6" stroke="#a9ecd9" strokeWidth="1.5" />
      </svg>
      <div className={clsx('w-[667px] border-2 bg-[#55cfb0]', GREEN_UP)} />
      <svg width="13" height="12" viewBox="0 0 13 12" className="ml-auto">
        <path d="M1 1l11 5L1 11z" fill="#55cfb0" stroke="#a9ecd9" strokeWidth="1.5" />
        <path d="M12 6L1 11" stroke="#2d7563" strokeWidth="1.5" />
      </svg>
    </div>
  )
}

function MiniIcon({ children }) {
  return (
    <FramedButton className="w-[30px]">
      <svg width="17" height="17" viewBox="0 0 17 17" fill="none" stroke="#000">
        <path d="M.5.5h16v16H.5z" />
        {children}
      </svg>
    </FramedButton>
  )
}

function DrillDialog() {
  return (
    <div className="absolute left-[1027px] top-[243px] w-[779px] h-[529px] rounded-[7px] border border-[#d0d4dc] bg-linear-to-br from-[#3d4148] via-[#07080c] via-[30%] to-[#15161c] overflow-hidden">
      <div className="h-[28px] flex pl-[6px] relative bg-linear-to-r from-[#75777b] via-[#0b0d11] via-[32%] to-[#16181d]">
        <XIcon className="mt-[6px]" />
        <div className="absolute left-[22px] top-[6px] w-[124px] h-[17px] rounded-full bg-[#a2a4a6]/60 blur-[4px]" />
        <span className="relative ml-[5px] mt-[4px] h-[18px] font-['Open_Sans',sans-serif] text-[12.5px] leading-[18px] tracking-[0.05px] text-black whitespace-pre">
          Drill Tool Manager
        </span>
        <div className="ml-auto mr-[5px] h-[19px] flex border border-t-0 border-[#b9bcc2] rounded-b-[4px] overflow-hidden">
          <div className="w-[28px] border-r border-[#b9bcc2] bg-linear-to-b from-[#84878d] via-[#3a3d44] to-[#5a5e66] flex items-end justify-center pb-[4px]">
            <i className="block w-[11px] h-[4px] bg-white border border-[#555]" />
          </div>
          <div className="w-[27px] border-r border-[#b9bcc2] bg-linear-to-b from-[#84878d] via-[#3a3d44] to-[#5a5e66] flex items-center justify-center">
            <i className="block w-[10px] h-[8px] border-2 border-white" />
          </div>
          <div className="w-[46px] bg-linear-to-b from-[#d99384] via-[#b42f1c] to-[#d2553f] flex items-center justify-center">
            <svg width="12" height="10" viewBox="0 0 12 10">
              <path d="M2 1l8 8M10 1L2 9" stroke="#fff" strokeWidth="2.4" />
            </svg>
          </div>
        </div>
      </div>
      <div className="ml-[6px] w-[766px] h-[493px] bg-[#55cfb0] border-l border-t border-black/60 flex flex-col">
        <div className="h-[33px] flex shrink-0">
          <FramedButton className="w-[167px]" inner="!justify-between pl-[3px] pr-[14px]">
            <span>Layer</span>
            <span>:</span>
          </FramedButton>
          <div className="w-[109px] border border-black bg-[#9bdbda] py-[2px] px-px">
            <div className={clsx('w-[105px] h-full border-2 flex items-start pl-[2px]', DOWN)}>
              <Caret />
              <span className={clsx(MONO, '-ml-[2px]')}>drl</span>
            </div>
          </div>
          <div className="ml-[150px] w-[187px] border border-black bg-[#9bdbda] flex items-center py-[1px] pl-[9px] pr-[1px]">
            <span className={MONO}>Slots:</span>
            <div className={clsx(MONO, 'ml-[6px] flex-1 h-[28px] border-2 flex items-center justify-between pl-[30px] pr-[5px]', UP)}>
              Yes
              <OptionMark />
            </div>
          </div>
        </div>
        <div className="h-[29px] flex shrink-0">
          <div className="w-[307px] border border-black bg-[#9bdbda] flex items-center pl-px">
            <span className={clsx(MONO, 'w-[165px]')}>Board Thickness :</span>
            <div className={clsx('w-[105px] h-[24px] border-2 flex items-start pl-[3px]', DOWN)}>
              <Caret />
              <span className={clsx(MONO, '-ml-[3px]')}>1000</span>
            </div>
            <span className={clsx(MONO, 'ml-[3px]')}>my</span>
          </div>
          <FramedButton className="w-[176px]" inner="!justify-start pl-[2px]">
            User Parameters :
          </FramedButton>
          <div className="ml-[3px] w-[127px] border border-black bg-[#9bdbda] p-[2px]">
            <div className={clsx('h-full border-2 flex items-start pl-[3px]', DOWN)}>
              <Caret />
              <span className={clsx(MONO, '-ml-[4px]')}>no_hasl</span>
            </div>
          </div>
        </div>
        <DrillTable />
        <Scrollbar />
        <div className="mt-[5px] h-[35px] flex shrink-0 border-b border-t border-black">
          <div className="w-[41px] border-2 border-t-0 border-black border-l bg-[#fdc54d] pl-[3px] flex items-center">
            <span className={SMALL}>T01</span>
          </div>
          <FramedButton className="ml-[2px] w-[58px]">First</FramedButton>
          <FramedButton className="w-[35px]">{'<--'}</FramedButton>
          <FramedButton className="w-[35px]">{'-->'}</FramedButton>
          <FramedButton className="w-[50px]">Last</FramedButton>
          <span className={clsx(MONO, 'ml-[3px] !leading-[33px] w-[58px]')}>Index:</span>
          <div className={clsx('w-[59px] my-px border-2 pl-[3px]', GREEN_DOWN)}>
            <Caret />
          </div>
          <div className="ml-[4px] flex">
            <MiniIcon>
              <path d="M7 12V10q-2-2-2-4 0-3 3.500-3T12 6q0 2-2 4v2zM7 14h3" />
            </MiniIcon>
            <MiniIcon>
              <path d="M3 3.500h7q3 1-1 3L7 8l5 2-1 2M3 6l3 2M3 14l2-2 2 2 2-2 2 2 2-2 1 2" />
            </MiniIcon>
            <MiniIcon>
              <path d="M7 12V10q-2-2-2-4 0-3 3.500-3T12 6q0 2-2 4v2zM7 14h3" />
              <path d="M2 2l13 13M15 2L2 15" stroke="#d22" strokeWidth="1.5" />
            </MiniIcon>
          </div>
          <div className="ml-auto w-[88px] bg-[#9bdbda] border-l border-r-2 border-black pl-[5px] py-px pr-[2px]">
            <div className={clsx(MONO, 'h-full border-2 flex items-center justify-between pl-[4px] pr-[5px]', UP)}>
              ml/my
              <OptionMark />
            </div>
          </div>
          <div className="w-[115px] bg-[#9bdbda] border-r-2 border-black pl-[5px] py-px pr-px mr-px">
            <div className={clsx(MONO, 'h-full border-2 flex items-center justify-between pl-[4px] pr-[6px]', UP)}>
              Regular
              <OptionMark />
            </div>
          </div>
        </div>
        <div className="mt-[3px] h-[35px] flex shrink-0 border-t-2 border-b border-black">
          <div className="w-[213px] border-l border-black" />
          <FramedButton className="w-[131px]">Combine Tools</FramedButton>
          <div className="w-[362px] bg-[#9bdbda] border-l border-black flex items-center pl-[10px]">
            <span className={MONO}>Merge Tools :</span>
            <div className={clsx(MONO, 'ml-auto mr-[2px] w-[214px] h-[28px] border-2 flex items-center justify-between pl-[4px] pr-[5px]', UP)}>
              Update Tools Numbers
              <OptionMark />
            </div>
          </div>
          <div className="w-[56px] p-px border-r border-black">
            <div className={clsx(MONO, 'h-[29px] border-2 bg-[#9bdbda] flex items-center justify-center', UP)}>Merge</div>
          </div>
        </div>
        <div className="h-[28px] flex shrink-0 pr-[2px]">
          {['Apply', 'Calc Drills', 'Update Table', 'Close'].map(b => (
            <FramedButton key={b} className="flex-1">{b}</FramedButton>
          ))}
        </div>
      </div>
    </div>
  )
}

function Arrows() {
  return (
    <svg width="1920" height="1080" className="absolute inset-0 pointer-events-none" fill="#0f0">
      <path d="M573.500 736L529 560M586.500 732.500L1249 445" stroke="#0f0" strokeWidth="4.500" strokeLinecap="round" />
      <path d="M523.500 535l13.500 25-17 3.500z" />
      <path d="M1274 434.500l-30 4.500 6.500 14z" />
    </svg>
  )
}

function LangBar() {
  return (
    <div className="absolute left-[1841px] top-[1014px] w-[79px] h-[25px] bg-linear-to-b from-[#8b9195] to-[#33383d] border-t border-[#d7dcdc] flex items-center">
      <svg width="79" height="24" viewBox="0 0 79 24">
        <path d="M5 4v16M8 4v16M11 4v16" stroke="#111" strokeWidth="1.5" strokeDasharray="1.5 2" />
        <rect x="20" y="11" width="14" height="8" rx="1" fill="#d8d5cf" stroke="#777" />
        <path d="M22 13.5h10M22 16h10" stroke="#666" strokeDasharray="1 1" />
        <path d="M26 10q0-3 4-2t4-2" stroke="#888" fill="none" />
        <circle cx="49" cy="12" r="7" fill="#1a1fb4" stroke="#c9cbe8" />
        <text x="45.5" y="16.5" fontSize="12" fill="#fff" className="font-['Liberation_Sans',sans-serif] font-bold">?</text>
        <path d="M68 8.5h5" stroke="#fff" strokeWidth="2" />
        <path d="M67.5 16h6l-3 3.5z" fill="#fff" />
      </svg>
    </div>
  )
}

export default function App() {
  return (
    <div className="relative w-[1920px] h-[1080px] overflow-hidden bg-[#0d356f] flex flex-col">
      <TitleBar />
      <div className="h-[1017px] shrink-0 flex">
        <div className="w-[8px] shrink-0 bg-linear-to-b from-[#7d94b3] via-[#1f4880] to-[#0e3a78] border-r-2 border-[#93a9bd]" />
        <div className="flex-1 flex flex-col bg-black">
          <MenuBar />
          <div className="h-[1px] shrink-0 bg-black" />
          <div className="h-[888px] shrink-0 flex">
            <Sidebar />
            <Canvas />
            <RightColumn />
          </div>
          <CommandRow />
          <div className="h-[31px] shrink-0 bg-black border-t border-black">
            <div className="h-[29px] border-t-2 border-t-[#6f7f80] bg-black pt-px pb-[1px] pl-[2px]">
              <div className="h-full bg-[#b2ffff] border-t-3 border-t-[#d9ffff] border-l-3 border-l-[#d9ffff] border-b-3 border-b-[#d9ffff] flex items-end">
                <div className="w-full h-[2px] bg-[#5c8d8d]" />
              </div>
            </div>
          </div>
          <div className="flex-1 bg-[#0f3a78] border-t border-[#9eb4cc]" />
        </div>
      </div>
      <Taskbar />
      <DrillDialog />
      <Arrows />
      <LangBar />
    </div>
  )
}
